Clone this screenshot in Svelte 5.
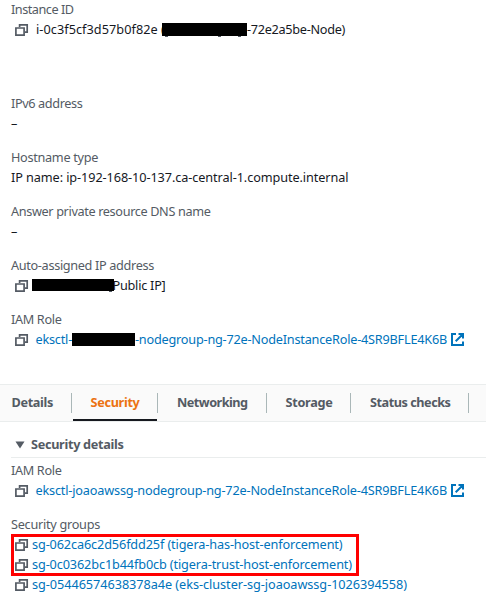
<script>
  // Tracks a text run so that it spans the given width.
  function fit(node, width) {
    const natural = node.getBoundingClientRect().width;
    const count = node.textContent.length;
    node.style.letterSpacing = `${(width - natural) / count}px`;
  }

  const tabs = [
    { name: 'Details', cls: 'first', w: 41.5 },
    { name: 'Security', cls: 'active', w: 49 },
    { name: 'Networking', cls: 'net', w: 70.5 },
    { name: 'Storage', cls: 'storage', w: 47 },
    { name: 'Status checks', cls: 'status', w: 80.5 }
  ];

  const groups = [
    { name: 'sg-062ca6c2d56fdd25f (tigera-has-host-enforcement)', w: 310.5 },
    { name: 'sg-0c0362bc1b44fb0cb (tigera-trust-host-enforcement)', w: 320 },
    { name: 'sg-05446574638378a4e (eks-cluster-sg-joaoawssg-1026394558)', w: 375 }
  ];
</script>

{#snippet copy()}
  <svg class="copy" width="14" height="14" viewBox="0 0 14 14">
    <path d="M4.6 5V2.9h7.6v7.2H10" />
    <path d="M.9 6h8.2v7.1H.9z" />
  </svg>
{/snippet}

{#snippet external()}
  <svg class="ext" width="13" height="13" viewBox="0 0 13 13">
    <path d="M5 1H1v11h11V8.5M7.5 1H12v4.5M12 1L4.7 8.3" />
  </svg>
{/snippet}

<main>
  <section class="summary">
    <div class="field">
      <div class="label"><span use:fit={62.5}>Instance ID</span></div>
      <div class="row">
        {@render copy()}
        <span class="value" use:fit={129}>i-0c3f5cf3d57b0f82e&nbsp;(</span>
        <b class="mask m1"><i class="f1"></i><i class="f2"></i><i class="f3"></i></b>
        <span use:fit={98}>-72e2a5be-Node)</span>
      </div>
    </div>
    <div class="field spaced">
      <div class="label"><span use:fit={71.5}>IPv6 address</span></div>
      <div class="row">–</div>
    </div>
    <div class="field">
      <div class="label"><span use:fit={87}>Hostname type</span></div>
      <div class="row"><span use:fit={337.5}>IP name: ip-192-168-10-137.ca-central-1.compute.internal</span></div>
    </div>
    <div class="field">
      <div class="label"><span use:fit={199.5}>Answer private resource DNS name</span></div>
      <div class="row">–</div>
    </div>
    <div class="field">
      <div class="label"><span use:fit={143}>Auto-assigned IP address</span></div>
      <div class="row">
        {@render copy()}
        <b class="mask m2"><i class="f4"></i></b>
        <span class="public" use:fit={53}>Public IP]</span>
      </div>
    </div>
    <div class="field">
      <div class="label"><span use:fit={50.5}>IAM Role</span></div>
      <div class="row link">
        {@render copy()}
        <span class="value role" use:fit={36.5}>eksctl-</span>
        <b class="mask m3"></b>
        <span use:fit={312}>-nodegroup-ng-72e-NodeInstanceRole-4SR9BFLE4K6B</span>
        {@render external()}
      </div>
    </div>
  </section>

  <nav>
    {#each tabs as tab}
      <div class="tab {tab.cls}"><span use:fit={tab.w}>{tab.name}</span></div>
    {/each}
  </nav>

  <section class="details">
    <div class="heading">
      <svg width="10" height="8" viewBox="0 0 10 8"><path d="M.5.5h9L5 7.5z" /></svg>
      <span use:fit={92.5}>Security details</span>
    </div>
    <div class="field">
      <div class="label"><span use:fit={50.5}>IAM Role</span></div>
      <div class="row link">
        {@render copy()}
        <span class="value role" use:fit={411.5}>eksctl-joaoawssg-nodegroup-ng-72e-NodeInstanceRole-4SR9BFLE4K6B</span>
        {@render external()}
      </div>
    </div>
    <div class="field groups">
      <div class="label"><span use:fit={89}>Security groups</span></div>
      {#each groups as group}
        <div class="row link">
          {@render copy()}
          <span class="sg" use:fit={group.w}>{group.name}</span>
        </div>
      {/each}
      <div class="highlight"></div>
    </div>
  </section>
</main>

<style>
  :global(body) { background: #fff; }
  main {
    width: 486px;
    height: 605px;
    overflow: hidden;
    display: flex;
    flex-direction: column;
    font: 12.7px/20px 'Noto Sans', 'Open Sans', sans-serif;
    color: #16191f;
    white-space: nowrap;
  }
  .summary {
    margin-top: -1px;
    height: 385px;
    padding-left: 11px;
    display: flex;
    flex-direction: column;
    gap: 14px;
  }
  .spaced { margin-top: 40px; }
  .label { height: 20px; color: #545b64; }
  .row { height: 20px; display: flex; align-items: center; }
  span { display: inline-block; flex: none; }
  .link { color: #0073bb; }
  .copy { flex: none; margin-left: 4px; fill: #fff; stroke: #545b64; stroke-width: 1.7; }
  .value { margin-left: 7px; }
  .role { margin-left: 6.5px; }
  .sg { margin-left: 3px; }
  .ext { flex: none; margin-left: 4px; fill: none; stroke: #0073bb; stroke-width: 2; }
  .mask { flex: none; position: relative; height: 13px; background: #000; }
  .m1 { width: 85px; margin-left: -3px; }
  .m2 { width: 82px; margin-left: 3px; height: 12px; }
  .m3 { width: 63px; }
  .public { margin-left: -1.5px; }
  .mask i { position: absolute; top: 100%; height: 1px; width: 3px; background: #545b64; }
  .f1 { left: 3px; }
  .f2 { left: 56px; }
  .f3 { left: 76px; }
  .mask .f4 { left: 77px; }

  nav {
    box-sizing: border-box;
    height: 38px;
    display: flex;
    align-items: center;
    background: #fafafa;
    border-top: 1px solid #eaeded;
    border-bottom: 1px solid #eaeded;
    color: #545b64;
    font-weight: 700;
  }
  .tab {
    box-sizing: border-box;
    position: relative;
    height: 20px;
    line-height: 19px;
    border-right: 1px solid #aab7b8;
  }
  .first { width: 72px; padding-left: 11.5px; }
  .active { width: 86px; padding-left: 18.5px; color: #ec7211; }
  .active::after {
    content: '';
    position: absolute;
    left: 1px;
    right: 0;
    bottom: -8px;
    height: 2px;
    background: #16191f;
  }
  .net { width: 109px; padding-left: 19px; }
  .storage { width: 84px; padding-left: 18.5px; }
  .status { width: 118px; padding-left: 19px; }

  .details { padding-left: 11px; }
  .heading {
    box-sizing: border-box;
    height: 36px;
    padding: 12px 0 3px 4px;
    display: flex;
    align-items: center;
    gap: 6px;
    border-bottom: 1px solid #eaeded;
    color: #545b64;
    font-weight: 700;
    margin-bottom: 2px;
  }
  .heading svg { fill: #545b64; position: relative; top: 1px; }
  .groups { position: relative; margin-top: 14px; }
  .highlight {
    position: absolute;
    box-sizing: border-box;
    left: 0;
    top: 20px;
    width: 348px;
    height: 42px;
    border: 3px solid #f00;
  }
</style>
